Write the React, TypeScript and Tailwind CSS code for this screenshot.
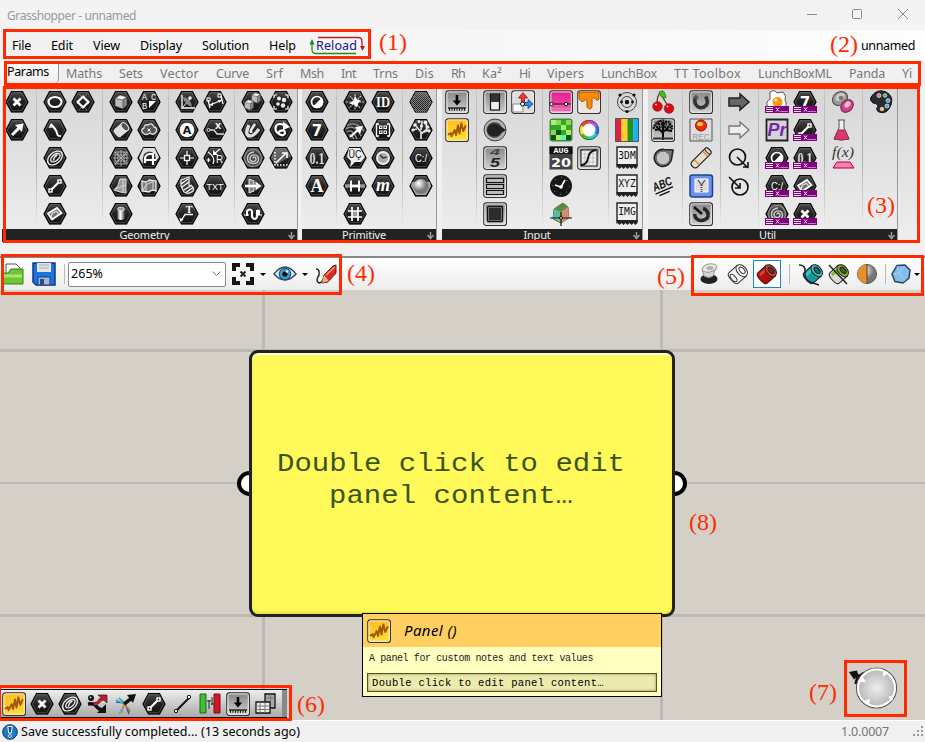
import React, { useLayoutEffect, useRef, useState } from "react";

/** Single-line label that spreads its letters to fill a given width. */
function Fit({ text, w, className = "" }: { text: string; w: number; className?: string }) {
  const ref = useRef<HTMLSpanElement>(null);
  const [ls, setLs] = useState(0);
  useLayoutEffect(() => {
    if (ref.current) setLs((w - ref.current.getBoundingClientRect().width) / text.length);
  }, [text, w]);
  return (
    <span className={"block shrink-0 whitespace-nowrap " + className} style={{ width: w }}>
      <span ref={ref} style={{ letterSpacing: ls }}>{text}</span>
    </span>
  );
}

type G = { children?: React.ReactNode };

function Svg({ children }: G) {
  return (
    <svg width="24" height="24" viewBox="0 0 24 24" fill="none" className="block overflow-visible">
      {children}
    </svg>
  );
}

function Hex({ children }: G) {
  return (
    <Svg>
      <path d="M6.500 2.500h11.400l5.600 10-5.600 10.300H6.500L.8 12.500z" fill="#1a1a1a" opacity=".3" />
      <path d="M6.500 1.500h11L23 12l-5.500 10h-11L1 12z" fill="url(#hexFill)" stroke="#050505" strokeWidth="1.200" />
      <path d="M7.200 2.800h9.600L21.600 12l-4.800 8.700H7.200L2.400 12z" stroke="#777" strokeWidth=".7" opacity=".75" />
      {children}
    </Svg>
  );
}

function Btn({ children, fill = "url(#btnFill)" }: G & { fill?: string }) {
  return (
    <Svg>
      <rect x=".8" y=".8" width="22.6" height="22.6" rx="2.5" fill={fill} stroke="#333" strokeWidth="1.2" />
      <rect x="1.9" y="1.9" width="20.4" height="20.4" rx="1.5" stroke="#fff" strokeWidth="1" opacity=".85" />
      {children}
    </Svg>
  );
}

function Label({ x = 12, y = 17, s = 10, f = "Liberation Serif", c = "#fff", b = true, i = false, w, children }: any) {
  return (
    <text x={x} y={y} fontSize={s} fontFamily={`"${f}", sans-serif`} fontWeight={b ? 700 : 400} fontStyle={i ? "italic" : "normal"} fill={c} textAnchor="middle" textLength={w} lengthAdjust="spacingAndGlyphs">
      {children}
    </text>
  );
}

/** Purple name strip across the lower edge of an icon. */
function Tagged({ children }: G) {
  return (
    <div className="relative">
      {children}
      <div className="absolute left-0 top-[16px] h-[7px] w-6">
        <Svg>
          <rect width="24" height="7" fill="#800080" />
          <path d="M1 1.500h7M1 3.500h7M1 5.500h7" stroke="#fff" strokeWidth=".9" />
          <path d="M11 1.500l3 4M14 1.500l-3 4" stroke="#fff" strokeWidth=".9" />
          <path d="M15.500 5.500h8" stroke="#fff" strokeWidth="1" strokeDasharray="1 1" />
        </Svg>
      </div>
    </div>
  );
}

const W = { stroke: "#fff", strokeWidth: 1.6 };
const cross = <path d="M8.500 8.500l7 7M15.500 8.500l-7 7" stroke="#fff" strokeWidth="2.800" />;
const lineGlyph = (
  <g {...W}>
    <path d="M8.500 15.500l7-7" strokeWidth="2.200" />
    <rect x="6" y="15" width="3" height="3" fill="#222" strokeWidth="1.400" />
    <rect x="15" y="6" width="3" height="3" fill="#222" strokeWidth="1.400" />
  </g>
);
const plane = (
  <g>
    <path d="M5 12l9-5.500 4.500 5L9 18z" stroke="#fff" strokeWidth="1.800" fill="#777" transform="translate(0 -.5)" />
    <path d="M8 15l1.500-4 4-1.500 2 2.500" stroke="#ddd" strokeWidth="1.200" />
  </g>
);
const swirl = (
  <g stroke="#888" strokeWidth="1.500">
    <circle cx="12" cy="12" r="8.500" fill="#444" />
    <path d="M12 12.500c0-2 3-2 3 .5 0 3.500-6 3.500-6-.5 0-5 8.500-5 8.500 1 0 5.500-11 5.500-11-1 0-4 3-6.500 6.500-6.500" stroke="#ccc" strokeWidth="1.400" />
  </g>
);
const rings = (
  <g stroke="#eee" strokeWidth="1.400" transform="rotate(-40 12 12)">
    <ellipse cx="12" cy="12" rx="8.500" ry="5.500" />
    <ellipse cx="12.500" cy="12" rx="5.500" ry="3" />
    <path d="M9 13q3-2.500 7-2" />
  </g>
);
const bool = (
  <g>
    <circle cx="12" cy="12" r="5.500" stroke="#fff" strokeWidth="1.700" />
    <path d="M16.500 8a6 6 0 0 1-8.500 8.500z" fill="#fff" />
  </g>
);
const squiggle = <path d="M3.500 16.500l2.200-1.500.8 3.300L9.700 12l1.300 5L13 7.500l1.500 8L16.300 5.500l2 7.500L20.500 8" stroke="#a2560a" strokeWidth="1.900" strokeLinejoin="round" strokeLinecap="round" />;
const panelIcon = <Btn fill="url(#gold)">{squiggle}</Btn>;
const importIcon = (
  <Btn>
    <path d="M12 5v8" stroke="#000" strokeWidth="2.600" />
    <path d="M7.800 10.500h8.400L12 15.500z" fill="#000" />
    <path d="M3 18h18" stroke="#111" strokeWidth="1.300" />
    <path d="M4 19.500h17" stroke="#111" strokeWidth="2.500" strokeDasharray="1 1.500" />
  </Btn>
);

const box = (
  <g stroke="#333" strokeWidth=".6">
    <path d="M6 8.500L11 5l7 2v8l-4 4-8-3z" fill="#bbb" />
    <path d="M6 8.500L11 5l7 2-4 3z" fill="#eee" />
    <path d="M14 10l4-3v8l-4 4z" fill="#888" />
  </g>
);
const text01 = <Label f="Liberation Serif" s={16} y={17.500} w={15} c="#ddd">0.1</Label>;
const seven = <Label f="DejaVu Sans" s={15} y={17.500}>7</Label>;
const cdrive = <Label f="Liberation Sans" s={10} y={15.500} b={false} w={12}>C:/</Label>;

const geometry: React.ReactNode[][] = [
  [
    <Hex>{cross}</Hex>,
    <Hex><path d="M7 17l8-8" stroke="#fff" strokeWidth="3" /><path d="M10 7l8.500-1.500L17 14z" fill="#fff" /></Hex>,
  ],
  [
    <Hex><ellipse cx="12" cy="12" rx="6.500" ry="5" stroke="#fff" strokeWidth="2.200" /></Hex>,
    <Hex><path d="M7 7q6 2 8 11" {...W} strokeWidth={1.900} /><path d="M5.500 10l3-5 3 4z" fill="#fff" /><path d="M15 18h3" {...W} /></Hex>,
    <Hex>{rings}</Hex>,
    <Hex>{lineGlyph}</Hex>,
    <Hex>{plane}</Hex>,
  ],
  [
    <Hex><path d="M8 4l10 10M16 4L6 14M6 10l10 10M18 10L8 20" stroke="#777" strokeWidth="1" /><path d="M12 6.500l5.500 5.500-5.500 5.500L6.500 12z" stroke="#fff" strokeWidth="2" /></Hex>,
  ],
  [
    <Hex>{box}</Hex>,
    <Hex><g transform="rotate(-40 12 12)"><rect x="5" y="7" width="13" height="10" rx="3" fill="#ddd" /><ellipse cx="17" cy="12" rx="2.800" ry="4.800" fill="#555" stroke="#eee" /></g></Hex>,
    <Hex><path d="M6 6h12v12H6zM12 4v16M4 12h16M6 6l12 12M18 6L6 18M9 6v12M15 6v12M6 9h12M6 15h12" stroke="#bbb" strokeWidth=".9" /></Hex>,
    <Hex><path d="M11 5h6v14l-6-1-6-2q5-4 6-11z" fill="#999" stroke="#ddd" /><path d="M14 5v13M6 15l11-4" stroke="#eee" strokeWidth=".8" /></Hex>,
    <Hex><path d="M8.500 7v10q3.500 2 7 0V7z" fill="url(#silver)" /><ellipse cx="12" cy="7" rx="3.500" ry="1.800" fill="#999" stroke="#eee" strokeWidth=".8" /></Hex>,
  ],
  [
    <Hex><Label x={7.500} y={9.500} s={8.500} b={false} f="Liberation Mono">A</Label><Label x={16.500} y={9.500} s={8.500} b={false} f="Liberation Mono">C</Label><Label x={7.500} y={19} s={8.500} b={false} f="Liberation Mono">B</Label><path d="M12 11h7l-7 7z" fill="#fff" /></Hex>,
    <Hex><path d="M6 15q-3-3 1-5 0-4 4-3 4-3 6 2 4 1 2 5-3 4-6 1-4 3-7 0z" fill="#555" stroke="#ddd" strokeWidth="1.400" /><path d="M10.500 10.500l3 3m0-3l-3 3" stroke="#fff" /></Hex>,
    <Hex><path d="M6.500 2h11L22 11l-3 4-1-7q-6-5-11 0-2 5-1 10L2 12z" fill="#ddd" /><path d="M8 17v-5q1-4 5-4h3v11M8 14h11" stroke="#fff" strokeWidth="2.200" /></Hex>,
    <Hex><path d="M5 7q5 2 7-1l7 1v10q-4-2-7 1l-7-1z" fill="#777" stroke="#eee" strokeWidth="1.300" /><path d="M6 16q3-7 10-8v9M9 7v10" stroke="#ddd" /></Hex>,
  ],
  [
    <Hex><path d="M7 5v13h13" {...W} strokeWidth={1.300} /><path d="M7 18L16 8" {...W} strokeWidth={1} /><path d="M8 7q8 1 9 10l-4-2-4-4z" fill="#888" /><circle cx="15" cy="8" r="1.800" fill="#eee" /></Hex>,
    <Hex><circle cx="12" cy="12" r="7.300" fill="#fff" /><Label s={11} y={15.800} f="DejaVu Sans" c="#111">A</Label></Hex>,
    <Hex><path d="M12 5v14M5 12h14" {...W} strokeWidth={1.200} /><rect x="9.500" y="9.500" width="5" height="5" fill="#222" {...W} strokeWidth={1.300} /></Hex>,
    <Hex><path d="M6 6l8-3v8q6 1 4 6-4 4-9 1l-3-6z" fill="#444" stroke="#eee" strokeWidth="1.200" /><path d="M6 10l7-5M7 13l7-5M9 16l8-5M11 18.500l7-5" stroke="#fff" strokeWidth="1.200" /></Hex>,
    <Hex><Label y={11} x={14} s={10}>T</Label><path d="M18 12.500h-8L6 19" {...W} strokeWidth={1.300} /><path d="M4.500 16l1 4 3-2.500z" fill="#fff" /></Hex>,
  ],
  [
    <Hex><path d="M5 10l2 8M18 6l2 8M7 15l12-5" {...W} strokeWidth={1.300} /><path d="M7 15l3-3v4zM19 10l-4 0 1 3z" fill="#fff" /><rect x="4" y="8" width="3" height="3" stroke="#fff" /><rect x="15" y="4" width="3" height="3" stroke="#fff" /></Hex>,
    <Hex><circle cx="5.500" cy="12" r="1.500" stroke="#ddd" /><path d="M7 12h4l3 4h7" stroke="#ddd" strokeWidth="1.300" /><Label x={15} y={11} s={11} f="Liberation Sans">x</Label></Hex>,
    <Hex><Label x={16.500} y={17} s={10} f="Liberation Sans" b={false}>R</Label><path d="M5 6q8 5 5 12M3.500 14h4M5.500 12v4M17 3l-6 5" {...W} strokeWidth={1.200} /><path d="M10 4v5h5z" fill="#fff" /></Hex>,
    <Hex><Label s={9.500} y={15.500} w={17} f="Liberation Sans" b={false}>TXT</Label></Hex>,
  ],
  [
    <Hex><g transform="translate(6 -1) scale(.75)">{box}</g><g transform="translate(-1 6) scale(.75)">{box}</g></Hex>,
    <Hex><path d="M8 7q-5 10 1 11 4 0 9-7" stroke="#ddd" strokeWidth="3.400" /><path d="M14 6l-4 6q-1 3 1 1" stroke="#eee" strokeWidth="2.500" /></Hex>,
    <Hex>{swirl}</Hex>,
    <Hex><path d="M8 5l5 2v10l-5 2z" fill="#888" stroke="#eee" /><path d="M4 12h12" stroke="#fff" strokeWidth="2.600" /><path d="M14.500 7.500l6 4.500-6 4.500z" fill="#fff" /></Hex>,
    <Hex><path d="M6 14V9q3-3 5 0v6q3 4 5 0V9q1-1 2 0v4" {...W} strokeWidth={2.100} /><path d="M3 13h5m8 0h5" stroke="#fff" /></Hex>,
  ],
  [
    <Hex><path d="M5 8V5h3M16 5h3v3M5 16v3h3M16 19h3v-3" {...W} strokeWidth={1.200} /><g fill="#eee"><circle cx="10" cy="8.500" r="2" /><circle cx="15" cy="10" r="2.200" /><circle cx="9" cy="14" r="1.800" /><circle cx="14" cy="15.500" r="2.200" /></g></Hex>,
    <Hex><path d="M18 8q-9-4-11 0-2 5 3 8 5 3 6-1 0-4-5-2l-2 2" {...W} strokeWidth={2.200} /><path d="M14 3.500l7 5.500-7 3z" fill="#fff" /></Hex>,
    <Hex><path d="M6 2h11l5 8-15 9-5-7z" fill="#888" opacity=".6" /><path d="M6 6v13h14" stroke="#fff" strokeDasharray="1.500 1.500" strokeWidth="1.500" /><path d="M7 17L17 7" {...W} /><path d="M13 7h5v5" {...W} /></Hex>,
  ],
];

const primitive: React.ReactNode[][] = [
  [
    <Hex>{bool}</Hex>,
    <Hex>{seven}</Hex>,
    <Hex>{text01}</Hex>,
    <Hex><Label s={18} y={18}>A</Label></Hex>,
  ],
  [
    <Hex><path d="M12 4v16M3 12h18M7 6l10 12M18 6L6 18" stroke="#ccc" strokeWidth="1.100" strokeDasharray="2 .7" /><path d="M12 6l2 3.500 4 1-3 3-1 4-3-3-5-1 4-2.500z" fill="#fff" /></Hex>,
    <Hex><path d="M4 8q8-6 17 5M3 11q8-6 15 7M4 14q5-4 10 7M6 17q2-1 5 4" stroke="#999" strokeWidth="1.200" /><path d="M7 19l9-8" {...W} strokeWidth={2.200} /><path d="M12 9l8-1-3 8z" fill="#fff" /></Hex>,
    <Hex><path d="M6 2h11l5 9-4 5h-6l-5 5 1-6-4-4z" fill="#eee" /><Label y={12} s={10} c="#111" f="Liberation Sans" b={false} w={13}>ÜÇ</Label></Hex>,
    <Hex><path d="M2 12h20" stroke="#999" strokeWidth="3.500" /><path d="M8 12h8M8 6.500v11M16 6.500v11" {...W} strokeWidth={1.900} /></Hex>,
    <Hex><rect x="9" y="9" width="6" height="6" fill="#999" /><path d="M9 5v14M15 5v14M5 9h14M5 15h14" {...W} strokeWidth={1.700} /></Hex>,
  ],
  [
    <Hex><Label s={15} y={17} w={14}>ID</Label></Hex>,
    <Hex><path d="M8 6H5.500v12H8M16 6h2.500v12H16" {...W} strokeWidth={1.300} /><g stroke="#fff" strokeWidth="1"><rect x="8.500" y="8" width="2.500" height="2.500" /><rect x="13" y="8" width="2.500" height="2.500" /><rect x="8.500" y="13" width="2.500" height="2.500" /><rect x="13" y="13" width="2.500" height="2.500" /></g></Hex>,
    <Hex><circle cx="12" cy="12" r="6" fill="#aaa" stroke="#eee" strokeWidth="2" /><path d="M9 9l3 3 4-1" stroke="#222" strokeWidth="1.200" /></Hex>,
    <Hex><Label s={18} y={16.500} i>m</Label></Hex>,
  ],
  [
    <Hex><path d="M6.500 2h11L23 12l-5.500 10h-11L1 12z" fill="url(#checks)" /></Hex>,
    <Hex><path d="M12 21v-7L7 8M12 16l6-5-1-5M8 11l-5 1M12 12l1-9M15 14l6-2" stroke="#ddd" strokeWidth="1.700" /><g fill="#eee"><circle cx="6" cy="7" r="1.800" /><circle cx="10" cy="3.500" r="1.500" /><circle cx="12.500" cy="8" r="1.500" /><circle cx="16.500" cy="4.500" r="2" /><circle cx="18.500" cy="9" r="1.800" /><circle cx="20" cy="13" r="1.500" /><circle cx="4" cy="12" r="1.500" /></g></Hex>,
    <Hex>{cdrive}</Hex>,
    <Hex><path d="M3 8h18l1 4-5 9H7l-5-9z" fill="#ccc" opacity=".75" /><circle cx="12" cy="12.500" r="7.500" fill="url(#ball)" /></Hex>,
  ],
];

const fileTag = (t: string) => (
  <Svg>
    <path d="M2 1h20v18H2z" fill="#eee" stroke="#222" strokeWidth="1.400" />
    <path d="M1.500 18h21v3l-2 2-2-2-2 2-2-2-2 2-2-2-2 2-2-2-2 2-2-2-1 1z" fill="#222" />
    <Label f="DejaVu Sans Mono" b={false} s={10} y={12.500} c="#111" w={17.500}>{t}</Label>
  </Svg>
);

const input: React.ReactNode[][] = [
  [importIcon, panelIcon],
  [
    <Btn><rect x="7.500" y="4" width="9" height="16" fill="#eee" stroke="#111" strokeWidth="1.200" /><path d="M8 4h8v8H8z" fill="#333" /></Btn>,
    <Svg><circle cx="12" cy="12" r="11" fill="#aaa" stroke="#444" /><circle cx="11.500" cy="12" r="8.800" fill="#555" stroke="#bbb" strokeWidth="1.500" /><path d="M4 12a7.500 7.500 0 0 1 13-4l6 4-6 4a7.500 7.500 0 0 1-13-4z" fill="#222" /></Svg>,
    <Btn><Label y={8.500} x={12} s={8.500} f="Liberation Sans" i c="#444" w={10}>4</Label><Label y={21} x={12} s={12} f="Liberation Sans" i c="#222" w={10}>5</Label></Btn>,
    <Btn><g stroke="#111" strokeWidth="1.200" fill="#bbb"><path d="M3.500 4.500h17v4h-17zM3.500 10.500h17v4h-17zM3.500 16.500h17v4h-17z" /></g></Btn>,
    <Btn><rect x="4.500" y="4.500" width="15" height="15" rx="1" fill="#888" stroke="#111" strokeWidth="1.300" /><rect x="6" y="6" width="12" height="12" fill="#2c2c2c" /></Btn>,
  ],
  [
    <Btn fill="#ddd"><path d="M2 14h10v8H2z" fill="#fff" stroke="#888" /><path d="M10.500 13V8H7.500L12 2.500 16.500 8h-3v5" fill="#ef3b33" stroke="#700" strokeWidth=".7" /><path d="M13 12.500h4V9.500l5 4.500-5 4.500v-3h-4" fill="#38e" stroke="#036" strokeWidth=".7" /><circle cx="11.500" cy="14" r="2" fill="#fff" stroke="#111" /></Btn>,
  ],
  [
    <Btn fill="url(#pink)"><path d="M2 14h20" stroke="#222" strokeWidth="1.200" /><path d="M2 17h20M2 20h20" stroke="#901060" strokeWidth="1" opacity=".4" /><circle cx="2.500" cy="14" r="1.700" fill="#fff" stroke="#111" /><circle cx="17" cy="14" r="1.700" fill="#fff" stroke="#111" /></Btn>,
    <Svg><rect x="1" y="1" width="22" height="22" rx="2" fill="#30a820" stroke="#575" /><path d="M2 2h5v5H2zM12 7h5v5h-5zM17 12h5v5h-5zM7 17h5v5H7z" fill="#b0ee68" /><path d="M7 2h5v5H7zM17 2h5v5h-5zM2 12h5v5H2z" fill="#8bd858" /><path d="M12 17h5v5h-5z" fill="#54ffa8" /><path d="M7 12h5v5H7zM17 17h5v5h-5zM2 17h5v5H2z" fill="#07530f" /></Svg>,
    <Svg><path d="M.5.500h23v23H.5z" fill="#444" /><path d="M.5.500h23v7.500H.5z" fill="#111" /><Label y={7} s={7.500} f="Liberation Mono" w={15}>AUG</Label><Label y={20.500} s={13} f="DejaVu Sans" w={20}>20</Label></Svg>,
    <Svg><circle cx="12" cy="12" r="11" fill="#171717" /><circle cx="12" cy="12" r="8.300" stroke="#999" strokeDasharray="1 5.500" /><path d="M6 11l6 2 4-7" {...W} /><circle cx="12" cy="13" r="1.800" fill="#fff" /></Svg>,
    <Svg><path d="M5 7l9-6 5 4 1 11-8 5-8-4z" fill="#7c8" stroke="#333" strokeWidth=".7" /><path d="M5 7l9-6 5 4-7 5z" fill="#5b8a3f" /><path d="M12 10l7-5 1 11-8 5z" fill="#d98a72" /><path d="M5 7l7 3v6l-8 1z" fill="#5ab9a0" /><path d="M1 16h22M12 10v14" stroke="#111" strokeWidth="1.200" /><circle cx="12" cy="16" r="1.500" fill="#ffd34e" stroke="#111" /></Svg>,
  ],
  [
    <Btn fill="#e8e4df"><path d="M2 2h20v7q-1 3-3.500 0-2.500-3-3.500 0v8q-2.500 4-5 0v-6q-1-3-3 0-3 2-5-2z" fill="#f88a08" stroke="#b85000" /></Btn>,
    <Svg><g strokeWidth="4"><path d="M12 4a8 8 0 0 1 7 4" stroke="#be49ea" /><path d="M19 8a8 8 0 0 1 0 8" stroke="#2774f2" /><path d="M19 16a8 8 0 0 1-7 4" stroke="#1dd5c1" /><path d="M12 20a8 8 0 0 1-7-4" stroke="#48c624" /><path d="M5 16a8 8 0 0 1 0-8" stroke="#efe432" /><path d="M5 8a8 8 0 0 1 7-4" stroke="#ff3b26" /></g><circle cx="12" cy="12" r="6.500" fill="#fff" opacity=".9" /><circle cx="12" cy="12" r="9.700" stroke="#555" strokeWidth="1" /></Svg>,
    <Btn><rect x="4" y="4" width="16" height="16" fill="#eee" stroke="#111" /><path d="M4 12h16M12 4v16M8 4v16M16 4v16M4 8h16M4 16h16" stroke="#aaa" strokeWidth=".6" /><path d="M4 19q6 0 7-7t8-8" stroke="#111" strokeWidth="1.800" /></Btn>,
  ],
  [
    <Svg><circle cx="12" cy="12" r="9.500" stroke="#444" /><circle cx="12" cy="12" r="5.500" stroke="#444" /><circle cx="12" cy="12" r="2.200" fill="#111" /><g fill="#111"><circle cx="5" cy="5" r="1.600" /><circle cx="19" cy="5" r="1.600" /><circle cx="12" cy="21.500" r="1.600" /><circle cx="6.500" cy="12" r="1.400" /><circle cx="17.500" cy="12" r="1.400" /></g></Svg>,
    <Svg><path d="M.5.500h6v23h-6z" fill="#e0203e" /><path d="M6.500.5h6v23h-6z" fill="#ffd024" /><path d="M12.500.5h6v23h-6z" fill="#249220" /><path d="M18.500.5h5v23h-5z" fill="#16b3f7" /><path d="M.5.500h23v23H.5z" stroke="#555" /></Svg>,
    fileTag("3DM"), fileTag("XYZ"), fileTag("IMG"),
  ],
];

const util: React.ReactNode[][] = [
  [
    <Svg><path d="M6 14Q6 6 9 3l8 13" stroke="#643c12" strokeWidth="1.300" /><path d="M8 2q6-4 7 6-6 0-7-6z" fill="#4b2" stroke="#271" strokeWidth=".7" /><circle cx="6.500" cy="16.500" r="4.800" fill="#d70b15" stroke="#8d0d11" strokeWidth=".6" /><circle cx="18" cy="18.500" r="4.800" fill="#d70b15" stroke="#8d0d11" strokeWidth=".6" /><path d="M4.500 15l1-1m10.500 3l1-1" stroke="#fff" strokeWidth="1.600" /></Svg>,
    <Btn><path d="M12 22V12M12 15l-5-5M12 14l6-5M12 12V4M9 11L4 12M15 12l6 1" stroke="#080808" strokeWidth="2" /><path d="M3 11q-1-3 2-4 1-4 4-3 2-3 6 0 4-1 4 3 4 2 1 4M5 9h15M7 6h9" stroke="#111" strokeWidth="2.500" strokeDasharray="2 .7" /><path d="M2 20.500h20" stroke="#333" strokeWidth="2" /></Btn>,
    <Svg><path d="M13 3.500l9 .5-1.500 9a8.700 8.500 0 1 1-7.500-9.500z" fill="#777" stroke="#222" strokeWidth="1.600" /><circle cx="12" cy="12" r="6.800" fill="#c4c4c4" stroke="#666" /></Svg>,
    <Svg><g transform="rotate(-23 12 12)"><Label y={14} s={12} f="Liberation Sans" i c="#111" w={20}>ABC</Label><path d="M2 16.500h19M5 19.500h11" stroke="#111" strokeWidth="1.300" /></g></Svg>,
  ],
  [
    <Btn><path d="M6.500 8q-2 5 2 8.500 5 3 9-1.500 2-4-1-8.500" stroke="#333" strokeWidth="3.600" /><path d="M3.500 8.500l7 0-3.500-4z" fill="#555" /></Btn>,
    <Svg><path d="M1 1h22v22H1z" fill="#ddd" stroke="#555" /><circle cx="12" cy="7.500" r="5.500" fill="#f22d00" stroke="#811" /><ellipse cx="11" cy="6" rx="3" ry="2" fill="#fc5" /><Label y={21.500} s={9} f="Liberation Sans" b={false} c="#999" w={17}>REC</Label></Svg>,
    <Svg><g transform="rotate(-45 12 12)"><rect x="0" y="8.200" width="24" height="7.600" rx="3" fill="#e5dfcd" stroke="#222" strokeWidth="1.200" /><path d="M6 9v6.500M18 9v6.500" stroke="#e79030" strokeWidth="1.600" /><ellipse cx="22" cy="12" rx="1.800" ry="3.800" fill="#ddd" stroke="#333" /></g></Svg>,
    <Svg><rect x="1" y="1" width="22.500" height="22" rx="2.500" fill="#6d91ef" stroke="#1c4195" strokeWidth="1.500" /><path d="M6 5h13v13H6z" fill="#ddd" stroke="#fff" /><path d="M9 6l3.500 5L16 6" stroke="#555" strokeWidth="1.300" /><path d="M12.500 11v7" stroke="#555" strokeWidth="2" strokeDasharray="1 1" /></Svg>,
    <Btn><path d="M5.500 12q1 7 7.500 6.500 7-1 6-7-1-4-5-5" stroke="#282828" strokeWidth="3.500" /><path d="M5 5l8 7" stroke="#111" strokeWidth="2.500" /></Btn>,
  ],
  [
    <Svg><path d="M2 8h11V4l9 8-9 8v-4H2z" fill="#666" stroke="#222" strokeWidth="1.500" /></Svg>,
    <Svg><path d="M2 8h11V4l9 8-9 8v-4H2z" fill="#eee" stroke="#777" strokeWidth="1.300" /></Svg>,
    <Svg><circle cx="10.500" cy="11" r="8" stroke="#111" strokeWidth="1.700" /><path d="M10 11l11 11m-5-1h5v-5" stroke="#111" strokeWidth="1.600" /></Svg>,
    <Svg><circle cx="13" cy="13" r="8" stroke="#111" strokeWidth="1.700" /><path d="M2 3l11 11M8 14h5V9" stroke="#111" strokeWidth="1.600" /></Svg>,
  ],
  [
    <Tagged><Svg><path d="M5 2q4-3 7 1l6-1q4 4 2 8 3 5-1 8H4q-5-5 1-9z" fill="#fff" stroke="#555" /><circle cx="12.500" cy="12" r="5" fill="#f99810" /><circle cx="11" cy="10" r="1.500" fill="#fff" opacity=".8" /></Svg></Tagged>,
    <Svg><path d="M1.500 1.500h21v21h-21z" fill="#d5d2d8" stroke="#222" strokeWidth="1.800" /><Label y={18} s={19} f="Liberation Sans" i c="#762aa7" w={19}>Pr</Label></Svg>,
    <Tagged><Hex>{bool}</Hex></Tagged>,
    <Tagged><Hex>{cdrive}</Hex></Tagged>,
    <Tagged><Hex>{swirl}</Hex></Tagged>,
  ],
  [
    <Tagged><Hex>{seven}</Hex></Tagged>,
    <Tagged><Hex>{lineGlyph}</Hex></Tagged>,
    <Tagged><Hex>{text01}</Hex></Tagged>,
    <Tagged><Hex>{plane}</Hex></Tagged>,
    <Tagged><Hex>{cross}</Hex></Tagged>,
  ],
  [
    <Svg><ellipse cx="9" cy="8.500" rx="8" ry="6.500" transform="rotate(-35 9 8.500)" fill="#999" stroke="#444" /><ellipse cx="9" cy="7" rx="5" ry="3.500" transform="rotate(-35 9 7)" fill="#ccc" /><circle cx="10" cy="8" r="2.300" fill="#777" /><ellipse cx="16" cy="16" rx="7" ry="5.500" transform="rotate(-45 16 16)" fill="#d54088" stroke="#722347" /><ellipse cx="16.500" cy="14.500" rx="3.500" ry="2.500" transform="rotate(-45 16.500 14.500)" fill="#ffc0e1" /></Svg>,
    <Svg><path d="M7 2h7M8 2v8L3 21q7 2 15 0l-5-11V2" fill="#eee" stroke="#555" /><path d="M7 12h7l4 9q-8 2-15 0z" fill="#da3678" stroke="#933" /></Svg>,
    <Svg><Label y={11} s={14} i b={false} c="#333" w={22}>f(x)</Label><path d="M6 16h13l4 6H2z" fill="#ff7fae" stroke="#a04" /></Svg>,
  ],
  [
    <Svg><path d="M4 13Q0 10 2 7 8-2 17 2q8 4 5 13-4 10-12 7-4-2-1-6-1-3-5-3z" fill="#292b30" stroke="#111" /><g stroke="#eee" strokeWidth=".7"><circle cx="10" cy="5.500" r="2" fill="#ee62b4" /><circle cx="16" cy="5.500" r="1.800" fill="#1cce58" /><circle cx="19" cy="10.500" r="2" fill="#3a9ef1" /><circle cx="18" cy="16" r="2" fill="#26b5ec" /><circle cx="13" cy="19" r="1.800" fill="#faca36" /></g></Svg>,
  ],
];

/** Ribbon panel: each entry of `sections` is the number of icon columns in that section. */
function Ribbon({ name, cls, sections, icons }: { name: string; cls: string; sections: number[]; icons: React.ReactNode[][] }) {
  let at = 0;
  return (
    <section className={"flex shrink-0 flex-col border-r border-r-[#999] bg-gradient-to-b from-[#d6d6d6] to-[#eee] " + cls}>
      <div className="flex h-[143px] pl-px pt-[2px]">
        {sections.map((n, s) => {
          const cols = icons.slice(at, at + n);
          at += n;
          return (
            <React.Fragment key={s}>
              {s > 0 && <div className="flex h-[138px] w-2.5 shrink-0 justify-center"><i className="w-px bg-gradient-to-b from-[#c8c8c8] via-[#aaa] to-[#e8e8e8]" /></div>}
              {cols.map((c, k) => (
                <div key={k} className="flex w-7 shrink-0 flex-col">
                  {c.map((ic, r) => <div key={r} className="flex h-7 items-center justify-center">{ic}</div>)}
                </div>
              ))}
            </React.Fragment>
          );
        })}
      </div>
      <div className="flex h-[13px] items-start justify-between bg-[#222] text-[11px] leading-[12px] text-[#eee]">
        <span className="w-0" />
        <span className="tracking-[-0.2px]">{name}</span>
        <svg width="10" height="11" viewBox="0 0 10 11"><path d="M4.500 3v6M1.500 6l3 3.500 3-3.500" stroke="#999" strokeWidth="1.500" fill="none" /></svg>
      </div>
    </section>
  );
}

const tabs: [string, number][] = [
  ["Maths", 36], ["Sets", 24], ["Vector", 39], ["Curve", 33], ["Srf", 17], ["Msh", 24], ["Int", 15], ["Trns", 25],
  ["Dis", 19], ["Rh", 14], ["Ka²", 20], ["Hi", 11], ["Vipers", 37], ["LunchBox", 56], ["TT Toolbox", 67],
  ["LunchBoxML", 74], ["Panda", 36], ["Yi", 10],
];
const menu: [string, number][] = [["File", 19], ["Edit", 22], ["View", 27], ["Display", 42], ["Solution", 47], ["Help", 27]];

const notes: [string, string][] = [
  ["1", "left-[379px] top-[28px]"], ["2", "left-[830px] top-[30px]"], ["3", "left-[867px] top-[191px]"],
  ["4", "left-[347px] top-[259px]"], ["5", "left-[657px] top-[262px]"], ["6", "left-[297px] top-[690px]"],
  ["7", "left-[809px] top-[678px]"], ["8", "left-[689px] top-[508px]"],
];
const frames = [
  "left-[3px] top-[29px] w-[368px] h-[30px]",
  "left-[4px] top-[61px] w-[917px] h-[25px]",
  "left-[3px] top-[86px] w-[917px] h-[157px]",
  "left-[1px] top-[254px] w-[341px] h-[41px]",
  "left-[691px] top-[255px] w-[233px] h-[41px]",
  "-left-[2px] top-[685px] w-[294px] h-[36px]",
  "left-[844px] top-[660px] w-[63px] h-[57px]",
];

const Caret = () => <i className="h-0 w-0 shrink-0 border-x-[3px] border-t-[3px] border-x-transparent border-t-black" />;

/** Tilted tube with its open end at the upper right. */
function Cyl({ a, b, wire }: { a: string; b: string; wire?: boolean }) {
  return (
    <g transform="rotate(-42 12 12)" stroke={wire ? "#333" : "#222"} strokeWidth="1">
      <path d="M17 5H6Q3 5 3 12t3 7h11z" fill={a} />
      {!wire && <path d="M16 8H6" stroke={b} strokeWidth="3" />}
      <ellipse cx="17" cy="12" rx="4.500" ry="7" fill={b} />
      <ellipse cx="17.500" cy="12" rx="2.200" ry="3.800" fill={wire ? "#fff" : "#222"} fillOpacity={wire ? 1 : 0.6} />
      {wire && <ellipse cx="6" cy="12" rx="2.200" ry="4.500" />}
    </g>
  );
}

export default function App() {
  return (
    <div className="relative flex h-[742px] w-[925px] flex-col overflow-hidden bg-[#f0f0f0] font-['Noto_Sans','Open_Sans',sans-serif] text-black">
      <svg width="0" height="0" className="absolute">
        <defs>
          <linearGradient id="hexFill" x2="0" y2="1"><stop stopColor="#4a4a4a" /><stop offset=".5" stopColor="#222" /><stop offset="1" stopColor="#111" /></linearGradient>
          <linearGradient id="btnFill" x2="0" y2="1"><stop stopColor="#858585" /><stop offset="1" stopColor="#d0d0d0" /></linearGradient>
          <linearGradient id="gold" x2="0" y2="1"><stop stopColor="#ffbd20" /><stop offset="1" stopColor="#ffdf38" /></linearGradient>
          <linearGradient id="pink" x2="0" y2="1"><stop stopColor="#d9208f" /><stop offset=".5" stopColor="#f5389f" /><stop offset="1" stopColor="#ffa0d0" /></linearGradient>
          <linearGradient id="silver"><stop stopColor="#777" /><stop offset=".4" stopColor="#fff" /><stop offset="1" stopColor="#555" /></linearGradient>
          <radialGradient id="ball" cx=".35" cy=".3"><stop stopColor="#fff" /><stop offset=".4" stopColor="#ccc" /><stop offset="1" stopColor="#777" /></radialGradient>
          <radialGradient id="knob"><stop stopColor="#eee" /><stop offset="1" stopColor="#b4b4b4" /></radialGradient>
          <pattern id="checks" width="2" height="2" patternUnits="userSpaceOnUse"><path d="M0 0h1v1H0zM1 1h1v1H1z" fill="#888" /></pattern>
        </defs>
      </svg>

      <header className="flex h-[30px] shrink-0 items-center bg-[#f3f3f3] pl-[7px] text-[12px] text-[#999]">
        <Fit text="Grasshopper - unnamed" w={129} className="pt-px" />
        <svg width="110" height="20" viewBox="0 0 110 20" className="ml-auto mr-[10px]" fill="none" stroke="#888">
          <path d="M2 9.500h10" /><rect x="47.500" y="4.500" width="9" height="9" rx="1" /><path d="M93 4l10 10M103 4L93 14" />
        </svg>
      </header>

      <nav className="flex h-[31px] shrink-0 items-center gap-5 bg-gradient-to-r from-[#f0f0f0] to-[#fdfdfd] pl-3 pr-2.5 pt-[2px] text-[12.5px]">
        {menu.map(([t, w]) => <Fit key={t} text={t} w={w} />)}
        <div className="relative">
          <Fit text="Reload" w={41} className="text-[#141496]" />
          <svg className="absolute -left-[7px] -top-[2px]" width="58" height="22" viewBox="0 0 58 22" fill="none">
            <path d="M9 2.500h40q4 0 4 4v7" stroke="#c11b1b" strokeWidth="1.300" /><path d="M51 11h5l-2.500 5z" fill="#c11b1b" />
            <path d="M47 18.500H7q-4 0-4-4V8" stroke="#139213" strokeWidth="1.300" /><path d="M.5 9.500h5L3 4z" fill="#139213" />
          </svg>
        </div>
        <Fit text="unnamed" w={54} className="ml-auto" />
      </nav>

      <div className="flex h-[25px] shrink-0 items-start gap-[17px] text-[12.5px] text-[#777]">
        <div className="-mr-[10px] h-[22px] w-[59px] rounded-br border-r border-[#999] bg-gradient-to-b from-white to-[#eee] pl-[7px] pt-[2px] text-black"><Fit text="Params" w={42} /></div>
        {tabs.map(([t, w]) => <Fit key={t} text={t} w={w} className="pt-[4px]" />)}
      </div>

      <div className="flex h-[172px] shrink-0 border-b-2 border-[#888] pl-[2px]">
        <div className="flex h-[156px]">
          <Ribbon name="Geometry" cls="w-[296px]" sections={[1, 2, 2, 2, 2]} icons={geometry} />
          <Ribbon name="Primitive" cls="ml-1 w-[135px]" sections={[1, 2, 1]} icons={primitive} />
          <Ribbon name="Input" cls="ml-[5px] w-[201px]" sections={[1, 2, 2, 1]} icons={input} />
          <Ribbon name="Util" cls="ml-[5px] w-[250px]" sections={[1, 1, 1, 2, 1, 1]} icons={util} />
          <div className="w-[22px] bg-gradient-to-b from-[#d6d6d6] to-[#eee]" />
        </div>
      </div>

      <div className="flex h-[32px] shrink-0 items-center bg-gradient-to-b from-white to-[#ececec] pl-[2px]">
        <Svg><path d="M4 2h10l4 4v7H4z" fill="#fff" stroke="#555" /><path d="M1 11h5l3-4h12v15H1z" fill="#72c437" stroke="#28830e" /><path d="M2 14h18" stroke="#a7e66f" strokeWidth="3" /></Svg>
        <div className="ml-[6px] mr-[8px]"><Svg><path d="M1 1h22v22H4l-3-3z" fill="#1677dd" stroke="#17347e" strokeWidth="1.500" /><path d="M5 1h14v9H5z" fill="#e5e5e5" /><path d="M7 3h10M7 6h10" stroke="#aaa" /><path d="M6 15h12v8H6z" fill="#aab7c9" stroke="#123b91" /><path d="M8 17h4v6H8z" fill="#244b91" /></Svg></div>
        <i className="h-5 w-px bg-[#bbb]" />
        <div className="ml-[3px] flex h-[25px] w-[158px] items-center justify-between rounded-[2px] border border-[#888] bg-white pl-[2px] pr-1 text-[12.500px]">
          <Fit text="265%" w={32} />
          <svg width="9" height="6" viewBox="0 0 9 6" fill="none" stroke="#777"><path d="M.5.500l4 4 4-4" /></svg>
        </div>
        <div className="ml-[5px] mr-[5px]"><Svg><path d="M3 9V3h6M15 3h6v6M3 15v6h6M15 21h6v-6" stroke="#151515" strokeWidth="4" /><path d="M9.500 9.500l5 5m0-5l-5 5" stroke="#222" strokeWidth="2" /></Svg></div>
        <Caret />
        <div className="ml-[7px] mr-[5px]"><Svg><path d="M1 12q11-14 22 0-11 12-22 0z" fill="#e0f1f5" stroke="#334955" strokeWidth="1.500" /><circle cx="12" cy="12" r="5.800" fill="#379bc9" stroke="#174c77" /><circle cx="12" cy="12" r="2.600" fill="#111" /><circle cx="14" cy="9.500" r="1.300" fill="#fff" /></Svg></div>
        <Caret />
        <div className="ml-[6px]"><Svg><path d="M2 7q4 0 3 6-4 6 0 8 4 0 7-9" stroke="#24242c" strokeWidth="1.500" /><path d="M8 21l2-8L19 4l3-1v8l-8 9z" fill="#dd2827" stroke="#621c16" /><path d="M8 21l2-8 5 6z" fill="#e1b37c" /><path d="M12 13l9-8" stroke="#ff9680" strokeWidth="1.500" /></Svg></div>
        <div className="ml-auto mr-[5px] flex items-center">
          <Svg><ellipse cx="12" cy="17" rx="8.500" ry="5" fill="#222" /><path d="M5 7l2 7q5 3 9 0l3-8z" fill="#d5d5d5" stroke="#999" /><ellipse cx="12.500" cy="6" rx="7.500" ry="4" transform="rotate(-12 12.500 6)" fill="#e5e5e5" stroke="#999" /><ellipse cx="13" cy="6" rx="3.500" ry="1.800" fill="#aaa" /></Svg>
          <div className="ml-[5px] mr-[3px]"><Svg><Cyl a="#f5f5f5" b="#fff" wire /></Svg></div>
          <div className="flex h-7 w-7 items-center justify-center border border-[#1984d8] bg-white"><Svg><Cyl a="#b80d0d" b="#e43932" /></Svg></div>
          <i className="ml-[8px] mr-[9px] h-5 w-px bg-[#bbb]" />
          <div><Svg><g transform="translate(2 0)"><Cyl a="#169aa0" b="#38c5c5" /></g><path d="M0 3q7 0 6 7t5 10l9 3" stroke="#222" strokeWidth="1.500" /></Svg></div>
          <div className="ml-[4px]"><Svg><Cyl a="#d8dcd4" b="#80b628" /><path d="M2 3l18 19" stroke="#222" strokeWidth="1.500" /></Svg></div>
          <div className="ml-[4px]"><Svg><circle cx="12" cy="12" r="9.500" fill="url(#ball)" stroke="#555" /><path d="M12 2.500a9.500 9.500 0 0 0 0 19z" fill="#e3912d" /><path d="M12 2v20" stroke="#733d08" /></Svg></div>
          <i className="ml-[6px] mr-[3px] h-5 w-px bg-[#bbb]" />
          <Svg><path d="M8 3.500l8-.5 5 5-1 8-6 5-8-1.500-3-7.500z" fill="#82bde9" stroke="#24476f" strokeWidth="1.500" /><path d="M8 4l2 7-6 1m6-1l6 8m-6-8l6-7" stroke="#a2d0f4" /></Svg>
          <div className="ml-px flex"><Caret /></div>
        </div>
      </div>

      <main className="relative h-[430px] shrink-0 overflow-hidden bg-[#d4d0c8]">
        <i className="absolute left-[262px] top-0 h-full w-[3px] bg-[#bdb9b2]" />
        <i className="absolute left-[660px] top-0 h-full w-[3px] bg-[#bdb9b2]" />
        <i className="absolute left-0 top-[59px] h-[3px] w-full bg-[#bdb9b2]" />
        <i className="absolute left-0 top-[192px] h-[2px] w-full bg-[#bdb9b2]" />
        <i className="absolute left-0 top-[324px] h-[3px] w-full bg-[#bdb9b2]" />
        <i className="absolute left-[237px] top-[181px] h-[25px] w-[25px] rounded-full border-4 border-black bg-white" />
        <i className="absolute left-[662px] top-[181px] h-[25px] w-[25px] rounded-full border-4 border-black bg-white" />
        <div className="absolute left-[249px] top-[60px] flex h-[267px] w-[426px] flex-col items-center rounded-[9px] border-[3px] border-[#222] bg-[#fffa5a] pr-[22px] pt-[96px] font-['Liberation_Mono',monospace] text-[29px] leading-[32px] text-[#3b5416] shadow-[inset_0_2px_1px_#fffde0,inset_0_-2px_3px_#e8df40]">
          <Fit text="Double click to edit" w={348} className="scale-y-[0.86]" />
          <Fit text="panel content…" w={244} className="scale-y-[0.86]" />
        </div>
        <div className="absolute left-[362px] top-[323px] h-[84px] w-[300px] border border-black bg-[#ffffc0]">
          <div className="flex h-[33px] items-center bg-[#ffd060] pl-1">
            {panelIcon}
            <Fit text="Panel ()" w={53} className="ml-[13px] text-[15px] italic" />
          </div>
          <Fit text="A panel for custom notes and text values" w={224} className="ml-[6px] mt-[4px] font-['Liberation_Mono',monospace] text-[10px] leading-[15px] text-[#222]" />
          <div className="ml-1 mt-[7px] flex h-[19px] w-[290px] items-center border border-[#55521b] bg-[#ecebae] pl-1 pt-[2px] font-['Liberation_Mono',monospace] text-[10.500px] shadow-[inset_0_0_3px_#88865b]">
            <Fit text="Double click to edit panel content…" w={232} />
          </div>
        </div>
        <div className="absolute left-0 top-[399px] flex h-[29px] w-[287px] items-center gap-1 border-y border-[#111] bg-gradient-to-b from-[#eee] to-[#aaa] pl-[2px]">
          {panelIcon}
          <Hex>{cross}</Hex>
          <Hex>{rings}</Hex>
          <Svg><circle cx="5" cy="6" r="3" fill="#111" /><circle cx="4.500" cy="5.500" r="1" fill="#ccc" /><path d="M2 12q6-1 8 2t6 4" stroke="#111" strokeWidth="3.500" /><path d="M8 12q5-1 6-4l3-1" stroke="#ae252e" strokeWidth="3.500" /><path d="M12 3l9 0v8z" fill="#ae252e" stroke="#511" strokeWidth=".7" /><path d="M20 12v9h-9z" fill="#111" /></Svg>
          <Svg><path d="M2 10l9 1 4 11" stroke="#2d42b8" strokeWidth="1.300" /><path d="M5 6l6 6 5 8" stroke="#28a747" strokeWidth="1.300" /><path d="M2 8l9 4-6 10" stroke="#2ac0df" strokeWidth="1.600" /><path d="M8 21l2-9 6 6" stroke="#ef742a" strokeWidth="1.300" /><path d="M10 12l8-6" stroke="#151515" strokeWidth="3.500" /><path d="M13 3l9-1-3 9z" fill="#111" /></Svg>
          <Hex>{lineGlyph}</Hex>
          <Svg><path d="M7 18L19 6" stroke="#111" strokeWidth="2" /><circle cx="6" cy="19" r="1.700" fill="#fff" stroke="#111" /><circle cx="19" cy="5" r="1.700" fill="#fff" stroke="#111" /></Svg>
          <Svg><path d="M2 2h6v19H2z" fill="#41bd31" stroke="#24671c" /><path d="M16 2h6v19h-6z" fill="#d51622" stroke="#731016" /><path d="M11 8v9m3-12v8M9 9h4m0 3h3" stroke="#222" /></Svg>
          {importIcon}
          <Svg><path d="M11 2h10v14H11z" fill="#aaa" stroke="#111" strokeWidth="1.300" /><path d="M2 10h14v11H2z" fill="#eee" stroke="#111" strokeWidth="1.300" /><path d="M2 14h14M2 17.500h14M6 10v11M11 10v11M12 6h9M16.500 2v8" stroke="#777" /></Svg>
          <i className="ml-auto h-[27px] w-1.5 bg-[#888]" />
        </div>
      </main>

      <footer className="flex grow items-center border-t border-[#fff] bg-[#f0f0f0] pl-[2px] pr-[1px] text-[12.500px]">
        <svg width="16" height="16" viewBox="0 0 16 16"><circle cx="8" cy="8" r="7.300" fill="#1e7ac9" stroke="#123456" /><path d="M5.800 2.500h4.400L9.300 9H6.700z" fill="#1b4b84" stroke="#fff" /><circle cx="8" cy="12" r="1.500" fill="#1b4b84" stroke="#fff" strokeWidth=".8" /></svg>
        <Fit text="Save successfully completed... (13 seconds ago)" w={279} className="ml-[3px] pt-px" />
        <Fit text="1.0.0007" w={48} className="ml-auto mr-[23px] pt-px text-[#777]" />
        <svg width="12" height="12" viewBox="0 0 12 12" fill="#999"><path d="M9 0h2v2H9zM5 4h2v2H5zM9 4h2v2H9zM1 8h2v2H1zM5 8h2v2H5zM9 8h2v2H9z" /></svg>
      </footer>

      <svg className="absolute left-[848px] top-[664px]" width="56" height="50" viewBox="0 0 56 50">
        <path d="M1 8l8-1.500 1 4 5-1-5 9q-2-3-1-5l-3 2z" fill="#111" />
        <path d="M8 20q0-6 8-11" stroke="#111" strokeWidth="3" fill="none" />
        <circle cx="28.500" cy="24" r="20" fill="url(#knob)" stroke="#555" strokeWidth="1.200" />
        <circle cx="28.500" cy="24" r="18.500" fill="none" stroke="#fff" strokeWidth="2" />
        <path d="M11 18l3-6 4 6zM35 6l5 3-5 4zM40 33l6-2-2 6zM17 36l5-1-1 6z" fill="#fff" />
      </svg>
      {frames.map((f) => <i key={f} className={"pointer-events-none absolute border-[3px] border-[#ff2a00] " + f} />)}
      {notes.map(([n, p]) => <span key={n} className={"absolute font-['Liberation_Serif',serif] text-[24px] leading-[28px] text-[#ff2a00] " + p}>({n})</span>)}
    </div>
  );
}
